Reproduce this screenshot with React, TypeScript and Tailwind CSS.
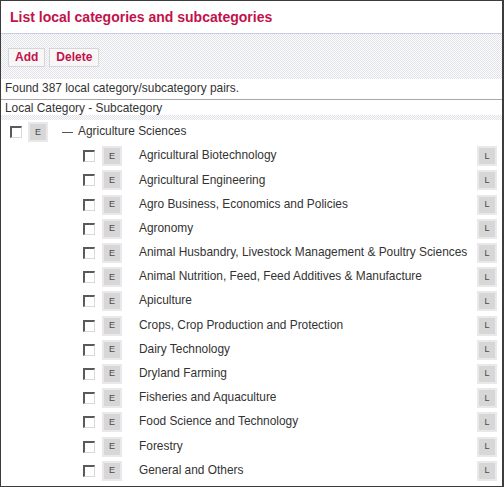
import React from 'react';

const subs = [
  'Agricultural Biotechnology',
  'Agricultural Engineering',
  'Agro Business, Economics and Policies',
  'Agronomy',
  'Animal Husbandry, Livestock Management & Poultry Sciences',
  'Animal Nutrition, Feed, Feed Additives & Manufacture',
  'Apiculture',
  'Crops, Crop Production and Protection',
  'Dairy Technology',
  'Dryland Farming',
  'Fisheries and Aquaculture',
  'Food Science and Technology',
  'Forestry',
  'General and Others',
];

// fine dithered pattern used by the toolbar and header strip
const hatch =
  'bg-[conic-gradient(#e2e2ea_25%,#fdfdfe_0_50%,#e2e2ea_0_75%,#fdfdfe_0)] bg-[length:2px_2px]';

function Check() {
  return <span className="block w-[12px] h-[12px] bg-white border-t-2 border-l-2 border-[#5a5a5a] border-r border-b border-r-[#d8d8d8] border-b-[#d8d8d8]" />;
}

function Tiny({ label }: { label: string }) {
  return (
    <span className="flex w-[20px] h-[20px] items-center justify-center bg-[#d7d7d7] border-2 border-[#ebe8ec] text-[9px] text-[#4a4a4a] leading-none">
      {label}
    </span>
  );
}

export default function App() {
  return (
    <div
      className="w-[504px] h-[487px] overflow-hidden bg-white border-t border-l border-b border-r-2 border-[#3c3c3c] text-[#333] text-[11.9px]"
      style={{ fontFamily: '"Liberation Sans", Arial, sans-serif' }}
    >
      <div className="h-[33px] flex items-center pl-[9px] text-[14px] font-bold text-[#c2124b] border-b border-[#c6cde0]">
        List local categories and subcategories
      </div>

      <div className={`h-[45px] flex items-center gap-[4px] pl-[7px] pt-[1px] ${hatch}`}>
        <button className="h-[19px] px-[6px] bg-[#f7f7f7] border border-[#d6d6d6] text-[12px] font-bold text-[#c2124b] leading-none">
          Add
        </button>
        <button className="h-[19px] px-[6px] bg-[#f7f7f7] border border-[#d6d6d6] text-[12px] font-bold text-[#c2124b] leading-none">
          Delete
        </button>
      </div>

      <div className="h-[21px] flex items-center pl-[4px] border-b border-[#a8a8a8]">
        Found 387 local category/subcategory pairs.
      </div>

      <div className="h-[15px] flex items-center pl-[4px] pt-[3px]">Local Category - Subcategory</div>
      <div className={`h-[5px] ${hatch}`} />

      <div className="flex items-center h-[24.2px]">
        <span className="ml-[9px]"><Check /></span>
        <span className="ml-[6px]"><Tiny label="E" /></span>
        <span className="ml-[14px] w-[11px] h-[1px] bg-[#555]" />
        <span className="ml-[5px]">Agriculture Sciences</span>
      </div>

      {subs.map((s) => (
        <div key={s} className="flex items-center h-[24.2px]">
          <span className="ml-[82px]"><Check /></span>
          <span className="ml-[7px]"><Tiny label="E" /></span>
          <span className="ml-[17px] flex-1 whitespace-nowrap">{s}</span>
          <span className="mr-[5px]"><Tiny label="L" /></span>
        </div>
      ))}
    </div>
  );
}
